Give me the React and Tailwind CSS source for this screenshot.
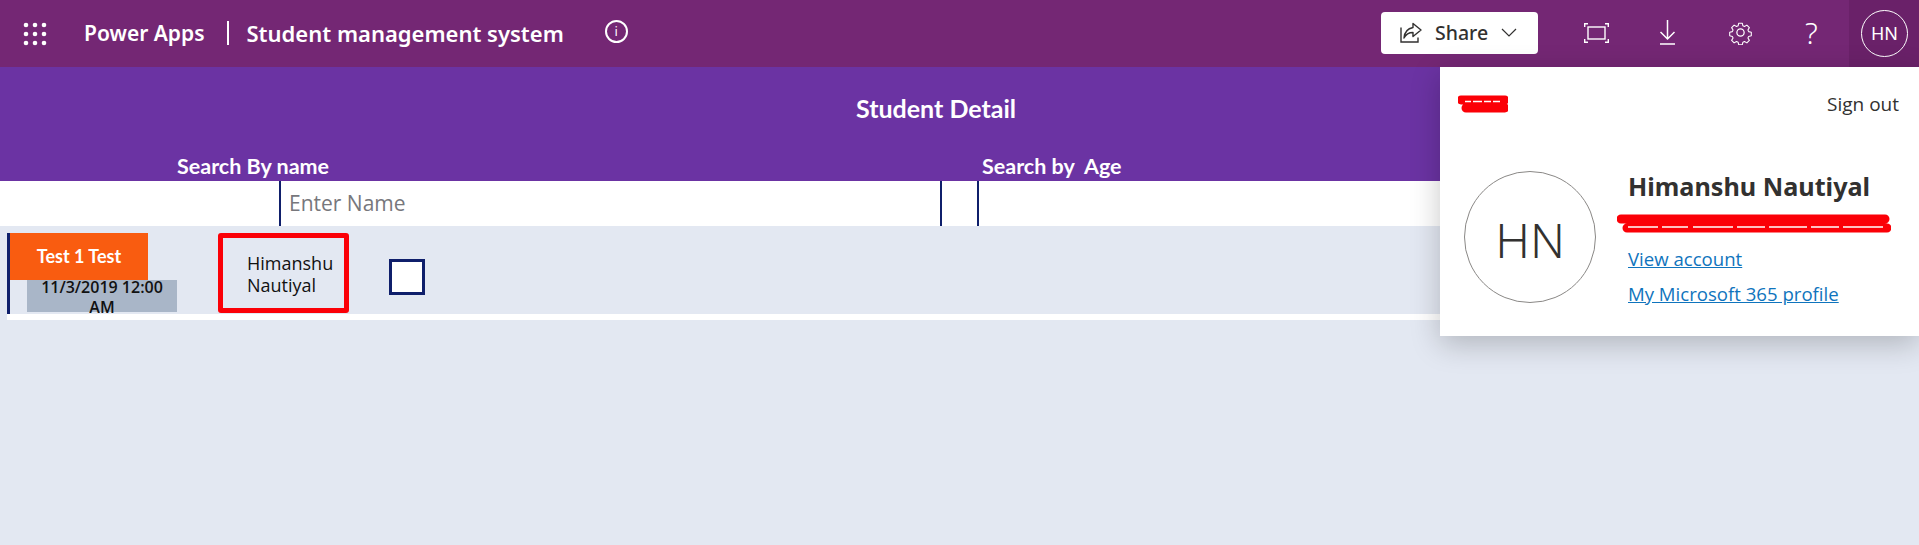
import React from "react";

function Waffle() {
  const pts = [0, 1, 2];
  return (
    <svg width="24" height="24" viewBox="0 0 24 24" fill="#fff">
      {pts.map((r) => pts.map((c) => <circle key={`${r}${c}`} cx={3 + c * 9} cy={3 + r * 9} r="2.3" />))}
    </svg>
  );
}

function ShareIcon() {
  return (
    <svg width="24" height="24" viewBox="0 0 24 24" fill="none" stroke="#323130" strokeWidth="1.4">
      <path d="M2 6.5V21h17v-4.5" />
      <path d="M14 2.5l8 6.5-8 6.5v-4c-4 0-7 1.5-9 5.5 .5-6 3.5-9.5 9-10.500z" strokeLinejoin="round" />
    </svg>
  );
}

function FocusIcon() {
  return (
    <svg width="25" height="20" viewBox="0 0 25 20" fill="none" stroke="#fff" strokeWidth="1.4">
      <rect x="4" y="4" width="17" height="12" />
      <path d="M.7 4V.7H4M21 .7h3.300V4M24.300 16v3.300H21M4 19.300H.7V16" />
    </svg>
  );
}

function DownloadIcon() {
  return (
    <svg width="17" height="25" viewBox="0 0 17 25" fill="none" stroke="#fff" strokeWidth="1.5">
      <path d="M8.500 0v19M1.500 12l7 7 7-7M1 24h15" />
    </svg>
  );
}

function GearIcon() {
  return (
    <svg width="25" height="25" viewBox="0 0 24 24" fill="none" stroke="#fff" strokeWidth="1.200" strokeLinejoin="round">
      <circle cx="12" cy="12" r="3.500" />
      <path d="M10 1.500h4l.7 3 1.800.8 2.700-1.600 2.800 2.800-1.600 2.700.8 1.800 3 .7v4l-3 .7-.8 1.800 1.600 2.700-2.800 2.800-2.700-1.600-1.800.8-.7 3h-4l-.7-3-1.800-.8-2.700 1.600-2.800-2.800 1.600-2.700-.8-1.800-3-.7v-4l3-.7.8-1.800-1.600-2.700 2.800-2.800 2.700 1.600 1.800-.8z" transform="translate(1.800 1.800) scale(.85)" />
    </svg>
  );
}

function SmallScribble() {
  return (
    <svg className="mt-[4px] ml-[18px] block" width="50" height="18" viewBox="0 0 50 18">
      <path d="M3 5h44M8 13h39" stroke="#fb0007" strokeWidth="9" strokeLinecap="round" fill="none" />
      <path d="M7 6.500h6M15 6.500h9M26 6.500h7M35 6.500h7" stroke="#fff" strokeWidth="1.500" fill="none" />
    </svg>
  );
}

function LongScribble() {
  return (
    <svg className="mt-[12px] ml-[-11px] block" width="274" height="20" viewBox="0 0 274 20">
      <path d="M4 5h264M10 14h260" stroke="#fb0007" strokeWidth="9" strokeLinecap="round" fill="none" />
      <path d="M11 13h30M45 13h26M76 13h40M120 13h28M152 13h38M194 13h28M226 13h40" stroke="#fff" strokeWidth="1.500" fill="none" />
    </svg>
  );
}

export default function App() {
  return (
    <div className="relative flex h-[545px] w-[1919px] flex-col overflow-hidden bg-[#e3e8f2] font-['Open_Sans','Noto_Sans',sans-serif]">
      {/* Top bar */}
      <header className="flex h-[67px] shrink-0 items-center bg-[#742774] text-white">
        <div className="ml-[23px] flex w-[61px] shrink-0 items-center"><Waffle /></div>
        <div className="flex -translate-y-[1px] items-center font-['Noto_Sans',sans-serif] text-[21px] leading-[28px] font-semibold">
          <span>Power Apps</span>
          <span className="mr-[18px] ml-[22px] h-[24px] w-[2px] bg-white" />
          <span className="text-[22px]">Student management system</span>
        </div>
        <div className="ml-[41px] flex h-[23px] w-[23px] -translate-y-[2px] items-center justify-center rounded-full border-2 border-white font-['Noto_Sans',sans-serif] text-[13px] leading-none">i</div>
        <div className="ml-auto flex h-full items-center">
          <button className="flex h-[42px] w-[157px] -translate-y-[1px] items-center rounded-[4px] bg-white pl-[18px] font-['Noto_Sans',sans-serif] text-[19.5px] font-medium text-[#323130]">
            <ShareIcon />
            <span className="ml-[12px]">Share</span>
            <svg className="ml-[13px]" width="16" height="10" viewBox="0 0 16 10" fill="none" stroke="#323130" strokeWidth="1.200"><path d="M1 1l7 7 7-7" /></svg>
          </button>
          <div className="ml-[46px] flex -translate-y-[1px] items-center">
            <FocusIcon />
            <div className="ml-[50px]"><DownloadIcon /></div>
            <div className="ml-[52px]"><GearIcon /></div>
          </div>
          <span className="ml-[52px] w-[16px] -translate-y-[1px] font-['Noto_Sans',sans-serif] text-[30px] leading-none font-light">?</span>
          <div className="ml-[28px] flex h-full w-[70px] items-center justify-center bg-[#6a2169] pl-[1px]">
            <div className="flex h-[47px] w-[47px] items-center justify-center rounded-full border border-white font-['Noto_Sans',sans-serif] text-[18px]">HN</div>
          </div>
        </div>
      </header>

      {/* Purple header of the app */}
      <section className="flex h-[114px] shrink-0 flex-col bg-[#6b33a3] font-['Lato',sans-serif] font-bold text-white">
        <div className="pt-[27px] pr-[47px] text-center text-[25px] leading-[28px]">Student Detail</div>
        <div className="mt-[32px] flex text-[21.5px] leading-[24px]">
          <span className="ml-[177px] w-[805px]">Search By name</span>
          <span className="whitespace-pre">Search by  Age</span>
        </div>
      </section>

      {/* Search row */}
      <section className="flex h-[45px] shrink-0 bg-white">
        <div className="ml-[279px] flex w-[663px] items-center border-x-2 border-l-[#0f1f6b] border-r-[#0f1f6b] pt-[1px] pl-[8px] text-[21px] text-[#77777c]">Enter Name</div>
        <div className="ml-[35px] w-[2px] bg-[#0f1f6b]" />
      </section>

      {/* Row */}
      <section className="mt-[7px] ml-[7px] flex h-[87px] border-b-[6px] border-white">
        <div className="h-full w-[190px] shrink-0 border-l-[3px] border-[#0f1f6b]">
          <div className="flex h-[47px] w-[138px] items-center justify-center bg-[#f95c10] font-['Lato',sans-serif] text-[18px] font-bold text-white">Test 1 Test</div>
          <div className="ml-[17px] h-[32px] w-[150px] bg-[#a9b6c8] text-center text-[16px] leading-[20px] font-semibold text-[#111]">
            <div className="relative -top-[3px]">11/3/2019 12:00<br />AM</div>
          </div>
        </div>
        <div className="ml-[21px] flex h-[80px] w-[131px] shrink-0 items-center rounded-[3px] border-[5px] border-[#fb0007] pt-[2px] pl-[24px] text-[18px] leading-[22px] text-[#111]">
          <span>Himanshu<br />Nautiyal</span>
        </div>
        <div className="mt-[26px] ml-[40px] h-[36px] w-[36px] shrink-0 border-[3px] border-[#0f1f6b] bg-white" />
      </section>

      {/* Account panel */}
      <aside className="absolute top-[67px] right-0 h-[269px] w-[479px] bg-white text-[#323130] shadow-[0_8px_28px_rgba(0,0,0,0.22)]">
        <div className="flex items-start justify-between pt-[24px] pr-[20px]">
          <SmallScribble />
          <span className="text-[19px] leading-[26px]">Sign out</span>
        </div>
        <div className="mt-[54px] ml-[24px] flex">
          <div className="flex h-[132px] w-[132px] shrink-0 items-center justify-center rounded-full border border-[#8a8886] pt-[6px] font-['Noto_Sans',sans-serif] text-[48px] font-light">HN</div>
          <div className="ml-[32px] flex flex-col items-start">
            <div className="mt-[-1px] font-['Noto_Sans',sans-serif] text-[25.2px] leading-[32px] font-bold whitespace-nowrap">Himanshu Nautiyal</div>
            <LongScribble />
            <a className="mt-[12px] text-[18.6px] leading-[26px] text-[#0f74bd] underline">View account</a>
            <a className="mt-[9px] text-[18.6px] leading-[26px] whitespace-nowrap text-[#0f74bd] underline">My Microsoft 365 profile</a>
          </div>
        </div>
      </aside>
    </div>
  );
}
